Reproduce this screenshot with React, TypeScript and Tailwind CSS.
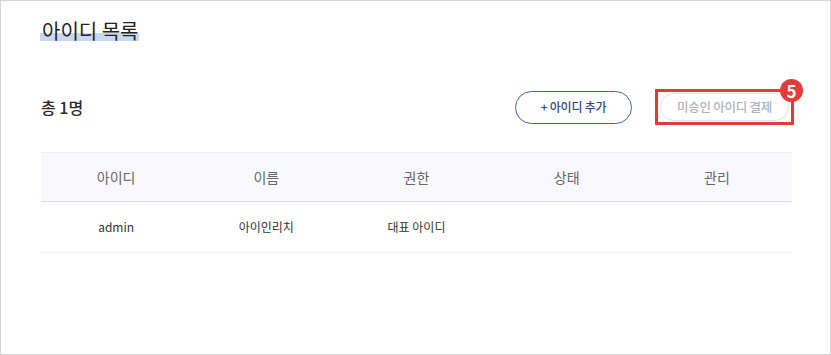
import React from "react";

const font = { fontFamily: '"Noto Sans CJK KR", "Noto Sans", sans-serif' };

export default function App() {
  const cols = ["아이디", "이름", "권한", "상태", "관리"];
  const row = ["admin", "아이인리치", "대표 아이디", "", ""];
  return (
    <div
      className="w-[831px] h-[355px] box-border border border-[#d6d6d6] bg-white text-[#222]"
      style={font}
    >
      <div className="pt-[17px] pl-[39px] pr-[38px]">
        <h1 className="m-0">
          <span className="inline-block pl-[2px] pr-[1px] text-[20px] leading-[26px] font-normal text-[#222] bg-[linear-gradient(to_bottom,transparent_56%,#c9d8ee_56%,#c9d8ee_90%,transparent_90%)]">
            아이디 목록
          </span>
        </h1>

        <div className="mt-[45px] flex items-center justify-between h-[36px]">
          <div className="pl-[1px] text-[16px] font-medium text-[#2a2a2a]">총 1명</div>
          <div className="flex items-center">
            <button className="w-[117px] h-[33px] rounded-full border border-[#3f63a8] bg-white text-[12px] font-medium text-[#2c4a86] tracking-[-0.02em]">
              + 아이디 추가
            </button>
            <div className="relative ml-[23px] -mr-[2px] w-[139px] h-[36px] border-[3px] border-[#e53a3a] box-border flex items-center justify-center">
              <button className="w-[129px] h-[28px] rounded-full border border-[#dfe1e5] bg-white text-[12.5px] font-medium text-[#aeb3bd] tracking-[-0.02em]">
                미승인 아이디 결제
              </button>
              <div className="absolute -top-[13px] -right-[12px] w-[23px] h-[23px] rounded-full bg-[#e63b3b] text-white text-[17px] font-bold flex items-center justify-center leading-none">
                5
              </div>
            </div>
          </div>
        </div>

        <div className="mt-[27px] pl-[1px]">
          <div className="grid grid-cols-5 h-[50px] bg-[#f9f9fd] border-t border-[#eeeef2] border-b border-b-[#d9d9e4] items-center">
            {cols.map((c) => (
              <div key={c} className="text-center text-[14px] text-[#666]">
                {c}
              </div>
            ))}
          </div>
          <div className="grid grid-cols-5 h-[51px] border-b border-[#f0f0f0] items-center">
            {row.map((c, i) => (
              <div key={i} className="text-center text-[12px] text-[#333]">
                {c}
              </div>
            ))}
          </div>
        </div>
      </div>
    </div>
  );
}
